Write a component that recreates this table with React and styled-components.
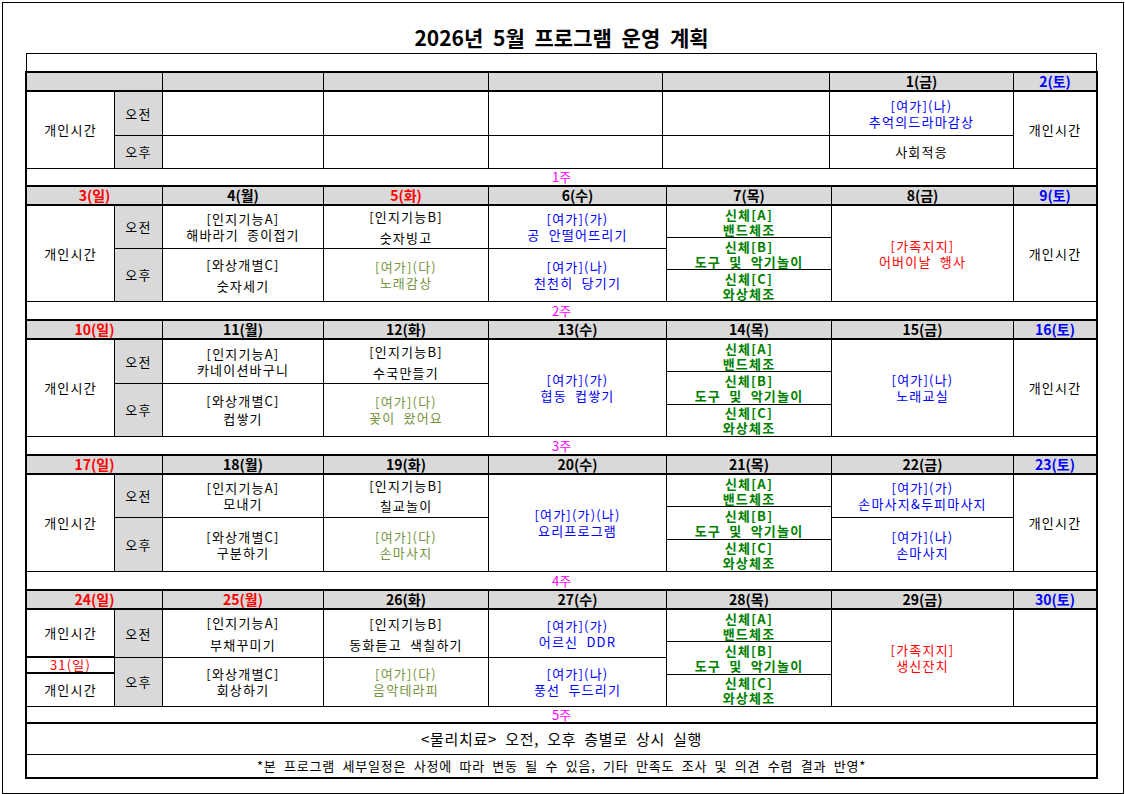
import React from "react";
import styled, { createGlobalStyle } from "styled-components";

const GlobalStyle = createGlobalStyle`
  html, body {
    margin: 0;
    padding: 0;
    background: #fff;
  }
  body {
    font-family: "Noto Sans CJK KR", "Noto Sans", sans-serif;
    color: #000;
  }
`;

const C = {
  black: "#000",
  blue: "#0000ff",
  red: "#ff0000",
  olive: "#76923c",
  green: "#008000",
  pink: "#ff00ff",
  gray: "#d9d9d9",
};

// week 1 sits on slightly different column lines than the rest
const COLS_FIRST = "87px 47px 160px 164px 173px 166px 183px 82px";
const COLS = "87px 47px 160px 164px 177px 164px 181px 82px";

const Frame = styled.div`
  margin: 2px;
  width: 1122px;
  height: 792px;
  box-sizing: border-box;
  border: 1px solid #000;
  padding: 0 25px 0 22px;
`;

const Title = styled.h1`
  margin: 0;
  height: 50px;
  box-sizing: border-box;
  padding-bottom: 4px;
  display: flex;
  align-items: flex-end;
  justify-content: center;
  font-size: 21px;
  line-height: 24px;
  font-weight: 700;
  word-spacing: 5px;
`;

const TopRow = styled.div`
  margin: 0 1px;
  height: 18px;
  box-sizing: border-box;
  border: 1px solid #000;
  border-bottom: none;
`;

const Table = styled.div`
  border: 2px solid #000;
  border-top: none;
`;

const Grid = styled.div`
  display: grid;
  grid-template-columns: ${(p) => p.$cols};
  grid-template-rows: ${(p) => p.$rows};
  gap: 1px;
  background: #000;
  border-top: 2px solid #000;
`;

const Head = styled.div`
  grid-column: ${(p) => (p.$wide ? "span 2" : "auto")};
  background: ${C.gray};
  color: ${(p) => p.$color || C.black};
  font-size: 14px;
  font-weight: 700;
  line-height: 17px;
  text-align: center;
`;

const Cell = styled.div`
  grid-column: ${(p) => p.$col || "auto"};
  grid-row: ${(p) => p.$row || "auto"};
  background: ${(p) => (p.$gray ? C.gray : "#fff")};
  color: ${(p) => p.$color || C.black};
  font-weight: ${(p) => (p.$bold ? 700 : 400)};
  font-size: 13px;
  line-height: ${(p) => p.$lh || 16}px;
  letter-spacing: 1.2px;
  display: flex;
  align-items: center;
  justify-content: center;
  text-align: center;
  white-space: pre;
`;

const Stack = styled.div`
  grid-column: ${(p) => p.$col};
  grid-row: 1 / span 2;
  display: grid;
  grid-template-rows: ${(p) => p.$rows};
  gap: ${(p) => p.$gap}px;
  background: #000;
`;

const Label = styled.div`
  height: ${(p) => p.$h}px;
  border-top: 1px solid #000;
  color: ${C.pink};
  font-size: 13px;
  line-height: ${(p) => p.$h}px;
  text-align: center;
`;

const Note = styled.div`
  height: ${(p) => p.$h}px;
  border-top: ${(p) => p.$line}px solid #000;
  font-size: ${(p) => p.$size}px;
  font-weight: ${(p) => p.$weight};
  line-height: ${(p) => p.$h}px;
  letter-spacing: ${(p) => p.$ls}px;
  text-align: center;
  white-space: pre;
`;

const Entry = ({ text, ...rest }) => (
  <Cell {...rest}>
    <span>{text}</span>
  </Cell>
);

const Physical = ({ col }) => (
  <Stack $col={col} $rows="1fr 1fr 1fr" $gap={1}>
    <Entry $color={C.green} $bold $lh={15} text={"신체[A]\n밴드체조"} />
    <Entry $color={C.green} $bold $lh={15} text={"신체[B]\n도구  및  악기놀이"} />
    <Entry $color={C.green} $bold $lh={15} text={"신체[C]\n와상체조"} />
  </Stack>
);

const weeks = [
  {
    cols: COLS_FIRST,
    rows: "43px 32px",
    label: 16,
    days: [[""], [""], [""], [""], [""], ["1(금)"], ["2(토)", C.blue]],
    body: (
      <>
        <Entry $col={3} $row={1} text="" />
        <Entry $col={3} $row={2} text="" />
        <Entry $col={4} $row={1} text="" />
        <Entry $col={4} $row={2} text="" />
        <Entry $col={5} $row={1} text="" />
        <Entry $col={5} $row={2} text="" />
        <Entry $col={6} $row={1} text="" />
        <Entry $col={6} $row={2} text="" />
        <Entry $col={7} $row={1} $color={C.blue} text={"[여가](나)\n추억의드라마감상"} />
        <Entry $col={7} $row={2} text="사회적응" />
        <Entry $col={8} $row="1 / span 2" text="개인시간" />
      </>
    ),
  },
  {
    cols: COLS,
    rows: "42px 52px",
    label: 17,
    days: [
      ["3(일)", C.red],
      ["4(월)"],
      ["5(화)", C.red],
      ["6(수)"],
      ["7(목)"],
      ["8(금)"],
      ["9(토)", C.blue],
    ],
    body: (
      <>
        <Entry $col={3} $row={1} text={"[인지기능A]\n해바라기  종이접기"} />
        <Entry $col={3} $row={2} $lh={21} text={"[와상개별C]\n숫자세기"} />
        <Entry $col={4} $row={1} $lh={21} text={"[인지기능B]\n숫자빙고"} />
        <Entry $col={4} $row={2} $color={C.olive} text={"[여가](다)\n노래감상"} />
        <Entry $col={5} $row={1} $color={C.blue} text={"[여가](가)\n공  안떨어뜨리기"} />
        <Entry $col={5} $row={2} $color={C.blue} text={"[여가](나)\n천천히  당기기"} />
        <Physical col={6} />
        <Entry $col={7} $row="1 / span 2" $color={C.red} text={"[가족지지]\n어버이날  행사"} />
        <Entry $col={8} $row="1 / span 2" text="개인시간" />
      </>
    ),
  },
  {
    cols: COLS,
    rows: "43px 52px",
    label: 17,
    days: [
      ["10(일)", C.red],
      ["11(월)"],
      ["12(화)"],
      ["13(수)"],
      ["14(목)"],
      ["15(금)"],
      ["16(토)", C.blue],
    ],
    body: (
      <>
        <Entry $col={3} $row={1} text={"[인지기능A]\n카네이션바구니"} />
        <Entry $col={3} $row={2} $lh={18} text={"[와상개별C]\n컵쌓기"} />
        <Entry $col={4} $row={1} $lh={21} text={"[인지기능B]\n수국만들기"} />
        <Entry $col={4} $row={2} $color={C.olive} text={"[여가](다)\n꽃이  왔어요"} />
        <Entry $col={5} $row="1 / span 2" $color={C.blue} text={"[여가](가)\n협동  컵쌓기"} />
        <Physical col={6} />
        <Entry $col={7} $row="1 / span 2" $color={C.blue} text={"[여가](나)\n노래교실"} />
        <Entry $col={8} $row="1 / span 2" text="개인시간" />
      </>
    ),
  },
  {
    cols: COLS,
    rows: "42px 53px",
    label: 17,
    days: [
      ["17(일)", C.red],
      ["18(월)"],
      ["19(화)"],
      ["20(수)"],
      ["21(목)"],
      ["22(금)"],
      ["23(토)", C.blue],
    ],
    body: (
      <>
        <Entry $col={3} $row={1} text={"[인지기능A]\n모내기"} />
        <Entry $col={3} $row={2} text={"[와상개별C]\n구분하기"} />
        <Entry $col={4} $row={1} $lh={20} text={"[인지기능B]\n칠교놀이"} />
        <Entry $col={4} $row={2} $color={C.olive} text={"[여가](다)\n손마사지"} />
        <Entry $col={5} $row="1 / span 2" $color={C.blue} text={"[여가](가)(나)\n요리프로그램"} />
        <Physical col={6} />
        <Entry $col={7} $row={1} $color={C.blue} text={"[여가](가)\n손마사지&두피마사지"} />
        <Entry $col={7} $row={2} $color={C.blue} text={"[여가](나)\n손마사지"} />
        <Entry $col={8} $row="1 / span 2" text="개인시간" />
      </>
    ),
  },
  {
    cols: COLS,
    rows: "47px 48px",
    label: 15,
    days: [
      ["24(일)", C.red],
      ["25(월)", C.red],
      ["26(화)"],
      ["27(수)"],
      ["28(목)"],
      ["29(금)"],
      ["30(토)", C.blue],
    ],
    last: true,
    body: (
      <>
        <Entry $col={3} $row={1} $lh={22} text={"[인지기능A]\n부채꾸미기"} />
        <Entry $col={3} $row={2} text={"[와상개별C]\n회상하기"} />
        <Entry $col={4} $row={1} $lh={21} text={"[인지기능B]\n동화듣고  색칠하기"} />
        <Entry $col={4} $row={2} $color={C.olive} text={"[여가](다)\n음악테라피"} />
        <Entry $col={5} $row={1} $color={C.blue} text={"[여가](가)\n어르신  DDR"} />
        <Entry $col={5} $row={2} $color={C.blue} text={"[여가](나)\n풍선  두드리기"} />
        <Physical col={6} />
        <Entry $col={7} $row="1 / span 2" $color={C.red} text={"[가족지지]\n생신잔치"} />
        <Entry $col={8} $row="1 / span 2" text="" />
      </>
    ),
  },
];

const Week = ({ week, index }) => (
  <>
    <Grid $cols={week.cols} $rows="17px">
      {week.days.map(([text, color], i) => (
        <Head key={i} $wide={i === 0} $color={color}>
          {text}
        </Head>
      ))}
    </Grid>
    <Grid $cols={week.cols} $rows={week.rows}>
      {week.last ? (
        <Stack $col={1} $rows="46px 14px 1fr" $gap={2}>
          <Entry text="개인시간" />
          <Entry $color={C.red} $lh={14} text="31(일)" />
          <Entry text="개인시간" />
        </Stack>
      ) : (
        <Entry $col={1} $row="1 / span 2" text="개인시간" />
      )}
      <Entry $col={2} $row={1} $gray text="오전" />
      <Entry $col={2} $row={2} $gray text="오후" />
      {week.body}
    </Grid>
    <Label $h={week.label}>{index + 1}주</Label>
  </>
);

export default function App() {
  return (
    <>
      <GlobalStyle />
      <Frame>
        <Title>2026년 5월 프로그램 운영 계획</Title>
        <TopRow />
        <Table>
          {weeks.map((w, i) => (
            <Week key={i} week={w} index={i} />
          ))}
          <Note $h={30} $line={2} $size={15} $weight={400} $ls={0.7}>
            {"<물리치료>  오전,  오후  층별로  상시  실행"}
          </Note>
          <Note $h={22} $line={1} $size={13} $weight={400} $ls={0.8}>
            {"*본  프로그램  세부일정은  사정에  따라  변동  될  수  있음,  기타  만족도  조사  및  의견  수렴  결과  반영*"}
          </Note>
        </Table>
      </Frame>
    </>
  );
}
